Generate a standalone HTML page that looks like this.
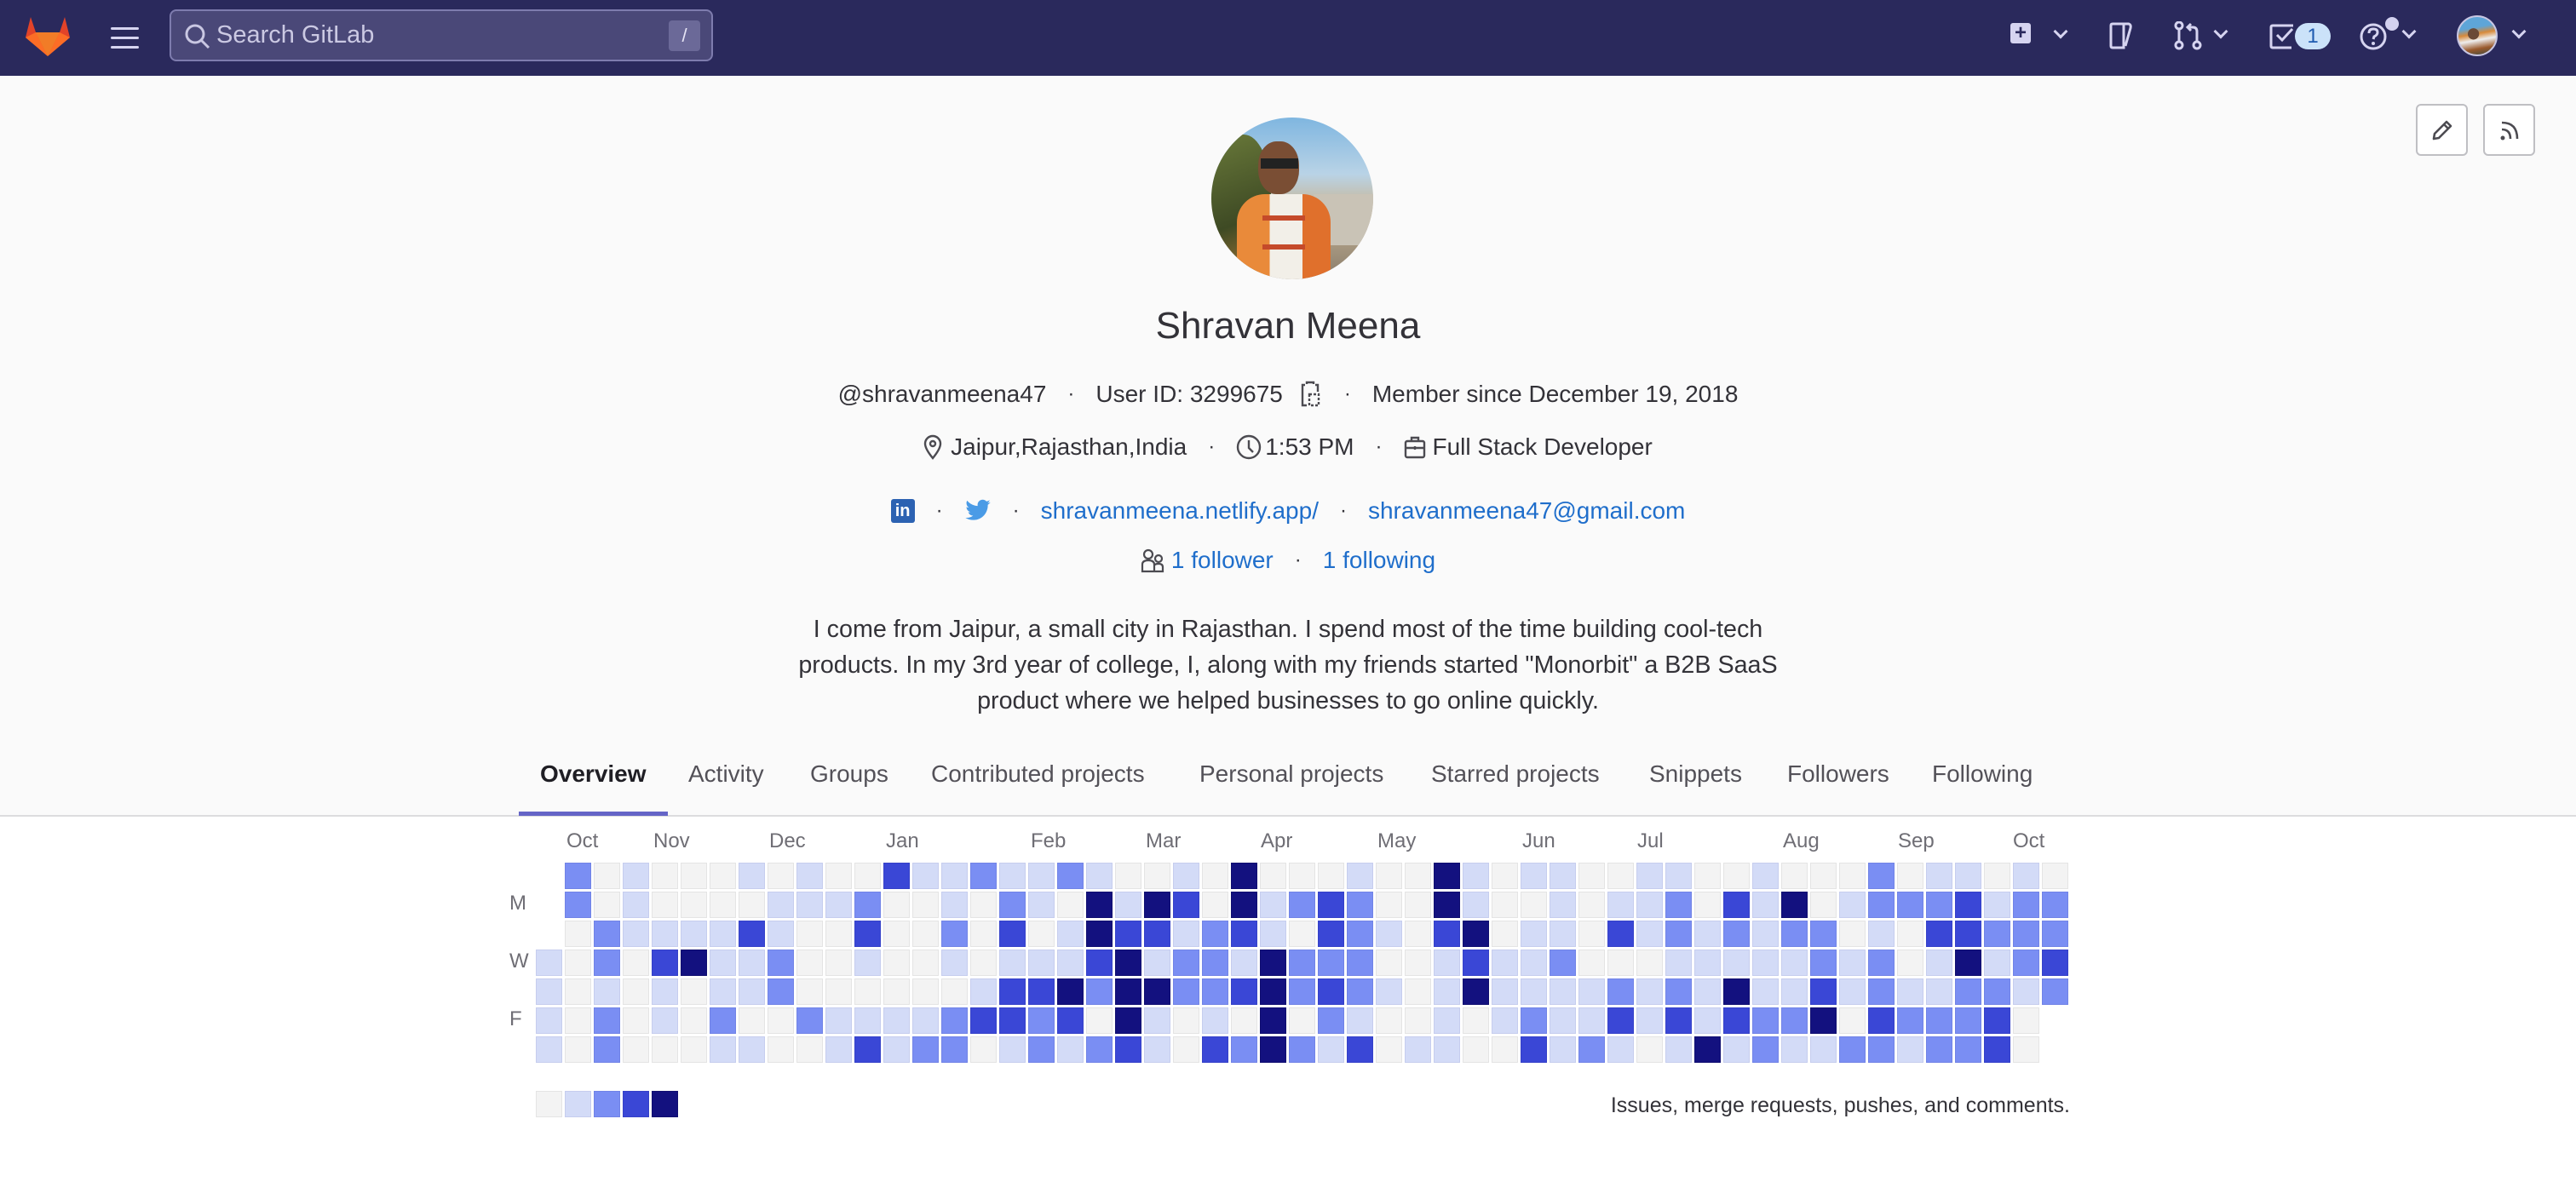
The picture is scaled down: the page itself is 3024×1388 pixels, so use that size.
<!DOCTYPE html>
<html><head><meta charset="utf-8">
<style>
*{margin:0;padding:0;box-sizing:border-box}
body{width:3024px;height:1388px;overflow:hidden;background:#fff;font-family:"Liberation Sans",sans-serif;color:#333238;position:relative}
.hdr{position:absolute;left:0;top:0;width:3024px;height:89px;background:#2a295c}
.top{position:absolute;left:0;top:89px;width:3024px;height:869px;background:#fafafa}
.abs{position:absolute}
.line{position:absolute;left:0;width:3024px;display:flex;justify-content:center;align-items:center;font-size:28px;color:#333238;white-space:nowrap}
.dot{margin:0 25px;font-size:24px}
a{color:#1f6ecb;text-decoration:none}
.tab{position:absolute;top:893px;font-size:28px;color:#535158}
.cell{position:absolute;width:31px;height:31px;border:1.5px solid}
.l0{background:#f3f3f3;border-color:#e4e4e4}
.l1{background:#d3dbf7;border-color:#c6cdee}
.l2{background:#7a8ef3;border-color:#7183e6}
.l3{background:#3a47d6;border-color:#3541c8}
.l4{background:#13117f;border-color:#100e70}
.mon{position:absolute;top:974px;font-size:24px;color:#6f6e75}
.day{position:absolute;left:598px;font-size:24px;color:#6f6e75}
.chev{position:absolute;width:12px;height:12px;border-right:3px solid #d6d4f0;border-bottom:3px solid #d6d4f0;transform:rotate(45deg)}
</style></head><body>
<div class="hdr">
  <svg class="abs" style="left:30px;top:18px" width="52" height="50" viewBox="0 0 52 50">
    <path d="M6 2 L12 20 L40 20 L46 2 L52 26 L26 48 L0 26 Z" fill="#e24329"/>
    <path d="M0 26 L12 20 L26 48 Z" fill="#fc6d26"/>
    <path d="M52 26 L40 20 L26 48 Z" fill="#fc6d26"/>
    <path d="M12 20 L40 20 L26 48 Z" fill="#fca326" opacity=".6"/>
  </svg>
  <div class="abs" style="left:130px;top:32px;width:33px;height:3px;background:#d6d4f0;box-shadow:0 11px 0 #d6d4f0,0 22px 0 #d6d4f0;border-radius:2px"></div>
  <div class="abs" style="left:199px;top:11px;width:638px;height:61px;background:#4a4878;border:2px solid #7e7cae;border-radius:8px"></div>
  <svg class="abs" style="left:216px;top:27px" width="32" height="32" viewBox="0 0 32 32"><circle cx="13" cy="13" r="10" stroke="#c9c7e2" stroke-width="3" fill="none"/><path d="M20 20 L29 29" stroke="#c9c7e2" stroke-width="3"/></svg>
  <div class="abs" style="left:254px;top:25px;font-size:29px;color:#cbc9e3">Search GitLab</div>
  <div class="abs" style="left:785px;top:24px;width:37px;height:36px;background:#6b6998;border-radius:4px;color:#e6e4f5;font-size:22px;text-align:center;line-height:36px">/</div>

  <div class="abs" style="left:2360px;top:27px;width:24px;height:24px;background:#d6d4f0;border-radius:3px;color:#2a295c;font-size:24px;font-weight:bold;text-align:center;line-height:24px">+</div>
  <div class="chev" style="left:2413px;top:31px"></div>
  <svg class="abs" style="left:2475px;top:26px" width="30" height="32" viewBox="0 0 30 32"><path d="M3 4 Q3 2 5 2 L18 2 L18 30 L5 30 Q3 30 3 28 Z M18 2 L24 2 Q27 3 26 7 L20 28" stroke="#d6d4f0" stroke-width="3" fill="none"/></svg>
  <svg class="abs" style="left:2552px;top:25px" width="34" height="34" viewBox="0 0 34 34"><circle cx="6" cy="5" r="4" stroke="#d6d4f0" stroke-width="3" fill="none"/><circle cx="6" cy="28" r="4" stroke="#d6d4f0" stroke-width="3" fill="none"/><circle cx="27" cy="28" r="4" stroke="#d6d4f0" stroke-width="3" fill="none"/><path d="M6 9 L6 24 M27 24 L27 12 Q27 7 22 7 L17 7 M20 3 L16 7 L20 11" stroke="#d6d4f0" stroke-width="3" fill="none"/></svg>
  <div class="chev" style="left:2601px;top:31px"></div>
  <svg class="abs" style="left:2664px;top:26px" width="34" height="32" viewBox="0 0 34 32"><path d="M28 4 L4 4 Q2 4 2 6 L2 28 Q2 30 4 30 L26 30" stroke="#d6d4f0" stroke-width="3" fill="none"/><path d="M9 15 L15 21 L27 8" stroke="#d6d4f0" stroke-width="3" fill="none"/></svg>
  <div class="abs" style="left:2694px;top:27px;width:42px;height:31px;background:#cbe2f9;border-radius:16px;color:#1f5bb0;font-size:24px;text-align:center;line-height:31px">1</div>
  <svg class="abs" style="left:2770px;top:26px" width="34" height="34" viewBox="0 0 34 34"><circle cx="16" cy="17" r="14" stroke="#d6d4f0" stroke-width="3" fill="none"/><path d="M11 13 Q11 8 16 8 Q21 8 21 12 Q21 15 17 17 L16 20" stroke="#d6d4f0" stroke-width="3" fill="none"/><circle cx="16" cy="25" r="2" fill="#d6d4f0"/></svg>
  <div class="abs" style="left:2800px;top:20px;width:16px;height:16px;background:#d3d1f0;border-radius:50%"></div>
  <div class="chev" style="left:2822px;top:31px"></div>
  <div class="abs" style="left:2884px;top:18px;width:48px;height:48px;border-radius:50%;border:2px solid #c8c6e2;background:radial-gradient(circle at 40% 45%,#6b4a36 0 18%,transparent 19%),linear-gradient(170deg,#5ea5d8 0 30%,#d88a3a 45%,#eee 60%,#9a5a2c 80%,#3b4a40)"></div>
  <div class="chev" style="left:2951px;top:31px"></div>
</div>
<div class="top"></div>
<div class="abs" style="left:0;top:957px;width:3024px;height:2px;background:#dcdcde"></div>

<div class="abs" style="left:2836px;top:122px;width:61px;height:61px;background:#fff;border:2px solid #bfbfc3;border-radius:6px"></div>
<svg class="abs" style="left:2853px;top:139px" width="28" height="28" viewBox="0 0 28 28"><path d="M4 24 L5 18 L19 4 L24 9 L10 23 Z M16 7 L21 12" stroke="#4c4b51" stroke-width="2.6" fill="none" stroke-linejoin="round"/></svg>
<div class="abs" style="left:2915px;top:122px;width:61px;height:61px;background:#fff;border:2px solid #bfbfc3;border-radius:6px"></div>
<svg class="abs" style="left:2932px;top:139px" width="28" height="28" viewBox="0 0 28 28"><circle cx="6" cy="23" r="2.5" fill="#4c4b51"/><path d="M5 13 Q15 13 15 24 M5 5 Q23 5 23 24" stroke="#4c4b51" stroke-width="2.6" fill="none"/></svg>

<div class="abs" style="left:1422px;top:138px;width:190px;height:190px;border-radius:50%;overflow:hidden;background:linear-gradient(180deg,#7fb6e0 0%,#b9d3e6 35%,#c7b79a 55%,#8a7c6a 100%)">
  <div class="abs" style="left:-10px;top:20px;width:80px;height:170px;background:linear-gradient(160deg,#6a7a3a,#3e4a24 60%,#b07a3a);border-radius:40%"></div>
  <div class="abs" style="left:120px;top:90px;width:90px;height:60px;background:#c9c3b6"></div>
  <div class="abs" style="left:55px;top:28px;width:48px;height:62px;border-radius:45%;background:#7a4e34"></div>
  <div class="abs" style="left:58px;top:48px;width:44px;height:12px;background:#222"></div>
  <div class="abs" style="left:30px;top:90px;width:110px;height:110px;border-radius:30% 30% 0 0;background:linear-gradient(90deg,#e98a3a 0 35%,#f2efe8 35% 70%,#e0702c 70%)"></div>
  <div class="abs" style="left:60px;top:115px;width:50px;height:40px;border:6px solid #c54a2a;border-width:6px 0;"></div>
</div>

<div class="line" style="top:358px;font-size:44px;color:#333238">Shravan Meena</div>
<div class="line" style="top:447px">@shravanmeena47<span class="dot">·</span>User ID: 3299675
  <svg style="margin-left:20px" width="24" height="32" viewBox="0 0 24 32"><path d="M8 4 L8 2 L16 2 L16 4 M6 5 L3 5 L3 29 L8 29 M18 5 L21 5 L21 13" stroke="#4c4b51" stroke-width="2.4" fill="none"/><rect x="11" y="16" width="11" height="13" stroke="#4c4b51" stroke-width="2.4" fill="none" stroke-dasharray="3 2"/></svg>
  <span class="dot" style="margin-left:28px">·</span>Member since December 19, 2018</div>
<div class="line" style="top:509px">
  <svg style="margin-right:10px" width="22" height="30" viewBox="0 0 22 30"><path d="M11 28 Q2 17 2 11 A9 9 0 0 1 20 11 Q20 17 11 28 Z" stroke="#4c4b51" stroke-width="2.4" fill="none"/><circle cx="11" cy="11" r="3" stroke="#4c4b51" stroke-width="2.4" fill="none"/></svg>Jaipur,Rajasthan,India<span class="dot">·</span>
  <svg style="margin-right:4px" width="30" height="30" viewBox="0 0 30 30"><circle cx="15" cy="15" r="13" stroke="#4c4b51" stroke-width="2.4" fill="none"/><path d="M15 7 L15 16 L20 21" stroke="#4c4b51" stroke-width="2.4" fill="none"/></svg>1:53 PM<span class="dot">·</span>
  <svg style="margin-right:8px" width="26" height="28" viewBox="0 0 26 28"><rect x="2" y="7" width="22" height="19" rx="2" stroke="#4c4b51" stroke-width="2.4" fill="none"/><path d="M9 7 L9 3 L17 3 L17 7 M2 15 L24 15 M13 13 L13 17" stroke="#4c4b51" stroke-width="2.4" fill="none"/></svg>Full Stack Developer</div>
<div class="line" style="top:584px">
  <div style="width:28px;height:28px;background:#2c62b2;border-radius:3px;color:#fff;font-size:20px;font-weight:bold;line-height:28px;text-align:center">in</div><span class="dot">·</span>
  <svg width="32" height="28" viewBox="0 0 24 20"><path d="M23 2.3c-.8.4-1.7.6-2.6.7.9-.6 1.6-1.4 2-2.5-.9.5-1.900.9-2.9 1.1C18.6.7 17.4.1 16.2.1c-2.5 0-4.5 2-4.5 4.5 0 .4 0 .7.1 1C8 5.4 4.7 3.600 2.5.9c-.4.7-.6 1.4-.6 2.3 0 1.6.8 2.9 2 3.8-.7 0-1.4-.2-2-.6v.1c0 2.2 1.6 4 3.6 4.4-.4.1-.8.2-1.2.2-.3 0-.6 0-.8-.1.6 1.8 2.2 3.1 4.2 3.1-1.5 1.2-3.5 1.9-5.6 1.9H1c2 1.3 4.4 2 6.9 2 8.3 0 12.8-6.9 12.8-12.8v-.6c.9-.6 1.7-1.4 2.3-2.3z" fill="#4a9be6"/></svg><span class="dot">·</span>
  <a>shravanmeena.netlify.app/</a><span class="dot">·</span><a>shravanmeena47@gmail.com</a></div>
<div class="line" style="top:642px">
  <svg style="margin-right:6px" width="30" height="30" viewBox="0 0 30 30"><circle cx="9" cy="8" r="5" stroke="#4c4b51" stroke-width="2.2" fill="none"/><circle cx="21" cy="13" r="4" stroke="#4c4b51" stroke-width="2.2" fill="none"/><path d="M2 28 L2 20 Q2 15 9 15 Q16 15 16 20 L16 28 Z M16 28 L26 28 L26 23 Q26 19 21 19 Q17 19 16 21" stroke="#4c4b51" stroke-width="2.2" fill="none"/></svg><a>1 follower</a><span class="dot">·</span><a>1 following</a></div>
<div class="abs" style="left:0;top:718px;width:3024px;text-align:center;font-size:28.7px;line-height:42px;color:#333238">I come from Jaipur, a small city in Rajasthan. I spend most of the time building cool-tech<br>products. In my 3rd year of college, I, along with my friends started "Monorbit" a B2B SaaS<br>product where we helped businesses to go online quickly.</div>

<div class="tab" style="left:634px;color:#1f1e24;font-weight:bold">Overview</div>
<div class="tab" style="left:808px">Activity</div>
<div class="tab" style="left:951px">Groups</div>
<div class="tab" style="left:1093px">Contributed projects</div>
<div class="tab" style="left:1408px">Personal projects</div>
<div class="tab" style="left:1680px">Starred projects</div>
<div class="tab" style="left:1936px">Snippets</div>
<div class="tab" style="left:2098px">Followers</div>
<div class="tab" style="left:2268px">Following</div>
<div class="abs" style="left:609px;top:953px;width:175px;height:5px;background:#6565c7"></div>

<div class="mon" style="left:665px">Oct</div><div class="mon" style="left:767px">Nov</div><div class="mon" style="left:903px">Dec</div><div class="mon" style="left:1040px">Jan</div><div class="mon" style="left:1210px">Feb</div><div class="mon" style="left:1345px">Mar</div><div class="mon" style="left:1480px">Apr</div><div class="mon" style="left:1617px">May</div><div class="mon" style="left:1787px">Jun</div><div class="mon" style="left:1922px">Jul</div><div class="mon" style="left:2093px">Aug</div><div class="mon" style="left:2228px">Sep</div><div class="mon" style="left:2363px">Oct</div>
<div class="day" style="top:1047px">M</div><div class="day" style="top:1115px">W</div><div class="day" style="top:1183px">F</div>
<div id="grid"></div>
<div class="cell l0" style="left:629px;top:1281px"></div><div class="cell l1" style="left:663px;top:1281px"></div><div class="cell l2" style="left:697px;top:1281px"></div><div class="cell l3" style="left:731px;top:1281px"></div><div class="cell l4" style="left:765px;top:1281px"></div>
<div class="abs" style="right:594px;top:1284px;font-size:25px;color:#333238">Issues, merge requests, pushes, and comments.</div>
<script>
var rows=[".2010001010031121121001040001004101100110010002011010",
".2010000111200102104143041232004100101120314012223122",
".0211113100300203014331231032103401103121212201033222",
"10203411200100101113412214222001311200011111212014123",
"10101011200000013342442234232101411112121411312112212",
"1020102002111123323041010402100101211313132240322230.",
"1020001100131220121231032421301100312101412112212230."];
var h="";for(var r=0;r<7;r++)for(var c=0;c<53;c++){var v=rows[r][c];if(v&&v!=".")h+='<div class="cell l'+v+'" style="left:'+(629+c*34)+'px;top:'+(1013+r*34)+'px"></div>';}
document.getElementById("grid").innerHTML=h;
</script>
</body></html>
